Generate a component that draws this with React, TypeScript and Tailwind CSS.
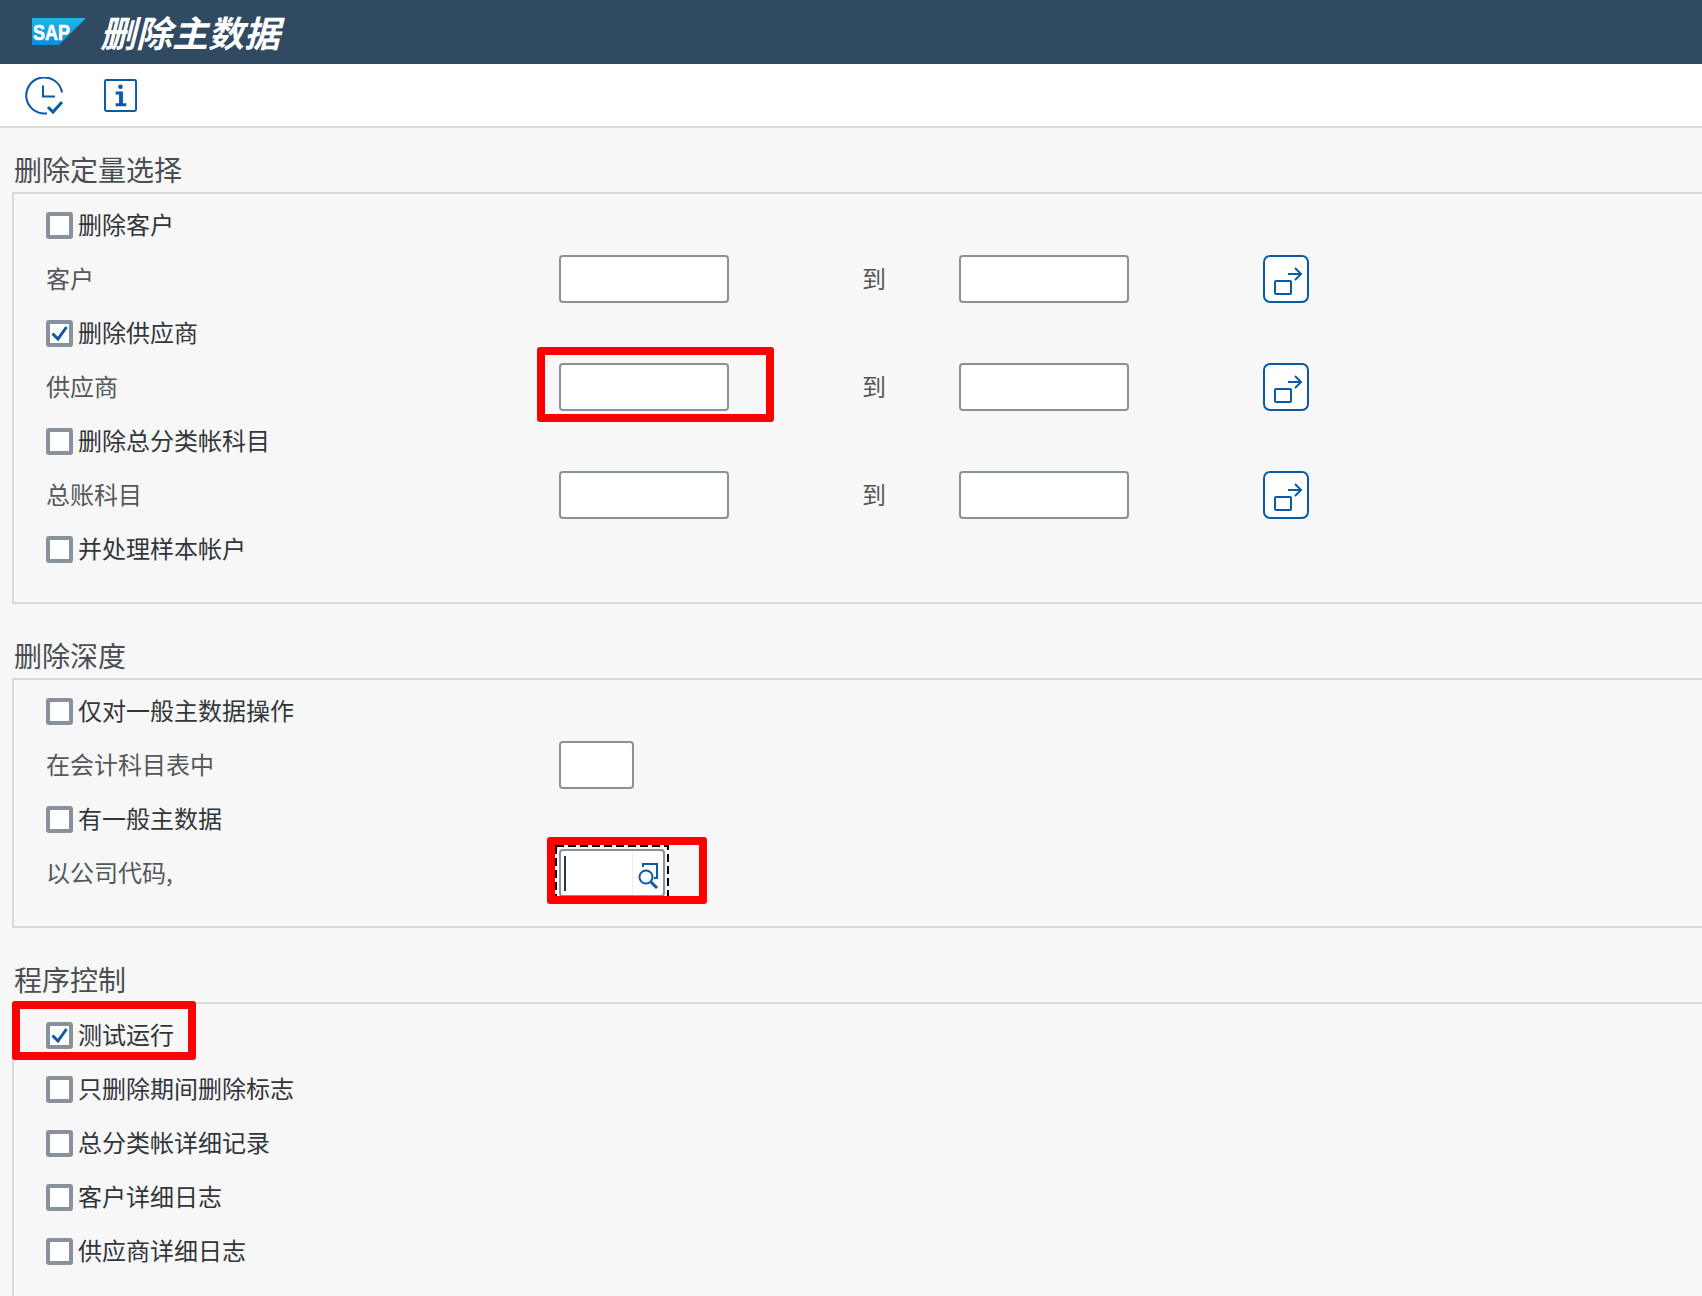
const FONT = "[font-family:'Noto_Sans_CJK_SC','Noto_Sans',sans-serif]";

function SapLogo() {
  return (
    <svg width="54" height="28" viewBox="0 0 54 28" className="shrink-0">
      <defs>
        <linearGradient id="sapBlue" x1="0" y1="0" x2="0" y2="1">
          <stop offset="0" stopColor="#1eb5ee" />
          <stop offset="1" stopColor="#0b8fd6" />
        </linearGradient>
      </defs>
      <polygon points="0,0 54,0 27,27 0,27" fill="url(#sapBlue)" />
      <text x="1" y="22" fontFamily="Liberation Sans" fontSize="22" fontWeight="700" fill="#fff" stroke="#fff" strokeWidth="0.6" textLength="37" lengthAdjust="spacingAndGlyphs">
        SAP
      </text>
    </svg>
  );
}

function ClockCheckIcon() {
  return (
    <svg width="40" height="40" viewBox="0 0 40 40" fill="none" stroke="#0a5aa5" className="mt-[3px] shrink-0">
      <path d="M37 15.5A18 18 0 1 0 22 36.2" strokeWidth="2" />
      <path d="M18 8.5V19.5H30" strokeWidth="2" />
      <path d="M23 30L28 35L37 25" strokeWidth="3" />
    </svg>
  );
}

function InfoIcon() {
  return (
    <svg width="33" height="33" viewBox="0 0 34 34" fill="none" className="mt-px shrink-0">
      <rect x="1" y="1" width="32" height="32" rx="1.5" stroke="#0a5aa5" strokeWidth="2" />
      <circle cx="17" cy="8" r="2.4" fill="#0a5aa5" />
      <path d="M12 13H19.5V25H23V28H12V25H15.5V16H12Z" fill="#0a5aa5" />
    </svg>
  );
}

function MultiSelectButton() {
  return (
    <button className="flex h-12 w-[46px] items-center justify-center rounded-[7px] border-2 border-[#0a5aa5] bg-white">
      <svg width="36" height="36" viewBox="0 0 36 36" fill="none" stroke="#0a5aa5" strokeWidth="2">
        <rect x="7" y="20" width="16" height="13" rx="1" />
        <path d="M20 13H32M27 7L33 13L27 19" />
      </svg>
    </button>
  );
}

function Checkbox({ checked = false }: { checked?: boolean }) {
  return (
    <span className="flex h-[27px] w-[27px] shrink-0 items-center justify-center rounded-[3px] border-4 border-[#89919a] bg-white">
      {checked && (
        <svg width="19" height="19" viewBox="0 0 19 19" fill="none" stroke="#0a5aa5" strokeWidth="3">
          <path d="M2.5 9.5L8 15L16.5 3" />
        </svg>
      )}
    </span>
  );
}

function CheckRow({ label, checked }: { label: string; checked?: boolean }) {
  return (
    <div className="flex h-[54px] items-center gap-[5px]">
      <Checkbox checked={checked} />
      <span className="-mt-[2px] text-[24px] leading-none text-[#32363a]">{label}</span>
    </div>
  );
}

function TextBox({ width = "w-[170px]" }: { width?: string }) {
  return <div className={`h-12 rounded-[4px] border-2 border-[#89919a] bg-white ${width}`} />;
}

function RedBox({ className }: { className: string }) {
  return <div className={`pointer-events-none absolute rounded-[3px] border-[8px] border-[#ff0000] ${className}`} />;
}

function FieldLabel({ text }: { text: string }) {
  return <span className="-mt-[2px] w-[513px] text-[24px] leading-none text-[#53585c]">{text}</span>;
}

function RangeRow({ label, marked }: { label: string; marked?: boolean }) {
  return (
    <div className="flex h-[54px] items-center">
      <FieldLabel text={label} />
      <div className="relative">
        <TextBox />
        {marked && <RedBox className="-top-[16px] -left-[22px] h-[75px] w-[237px]" />}
      </div>
      <span className="-mt-[2px] ml-[133px] w-[97px] text-[24px] leading-none text-[#53585c]">到</span>
      <TextBox />
      <div className="ml-[134px]">
        <MultiSelectButton />
      </div>
    </div>
  );
}

function Section({ title, children }: { title: string; children: React.ReactNode }) {
  return (
    <section>
      <h2 className="pb-[6px] pl-[14px] text-[28px] leading-[34px] text-[#4a4e52]">{title}</h2>
      <div className="relative ml-3 border-y-2 border-l-2 border-[#d9d9d9] pt-[4px] pb-[26px] pl-[32px]">{children}</div>
    </section>
  );
}

export default function App() {
  return (
    <div className={`h-[1296px] w-[1702px] overflow-hidden bg-[#f7f7f7] ${FONT}`}>
      <header className="flex h-16 items-center gap-[14px] bg-[#2f4a61] pl-8">
        <SapLogo />
        <h1 className="-mt-[2px] text-[36px] leading-none font-bold text-white italic">删除主数据</h1>
      </header>

      <div className="flex h-16 items-center gap-[39px] border-b-2 border-[#d9d9d9] bg-white pl-[25px]">
        <ClockCheckIcon />
        <InfoIcon />
      </div>

      <div className="pt-[24px]">
        <Section title="删除定量选择">
          <CheckRow label="删除客户" />
          <RangeRow label="客户" />
          <CheckRow label="删除供应商" checked />
          <RangeRow label="供应商" marked />
          <CheckRow label="删除总分类帐科目" />
          <RangeRow label="总账科目" />
          <CheckRow label="并处理样本帐户" />
        </Section>

        <div className="h-[34px]" />

        <Section title="删除深度">
          <CheckRow label="仅对一般主数据操作" />
          <div className="flex h-[54px] items-center">
            <FieldLabel text="在会计科目表中" />
            <TextBox width="w-[75px]" />
          </div>
          <CheckRow label="有一般主数据" />
          <div className="flex h-[54px] items-center">
            <FieldLabel text="以公司代码," />
            <div className="relative">
              <svg width="114" height="56" className="absolute -top-1 -left-1" fill="none" stroke="#000" strokeWidth="2">
                <rect x="1" y="1" width="112" height="54" strokeDasharray="8 4" />
              </svg>
              <div className="relative flex h-12 w-[106px] items-stretch rounded-[4px] border-2 border-[#89919a] bg-white">
                <div className="flex w-[72px] items-center border-r border-[#eeeeee] pl-[3px]">
                  <div className="h-[35px] w-[2px] bg-[#32363a]" />
                </div>
                <div className="flex flex-1 items-center justify-center">
                  <svg width="24" height="28" viewBox="0 0 24 28" fill="none" stroke="#0a5aa5" strokeWidth="2" className="mt-[5px]">
                    <path d="M7 5V2H21V16H18" />
                    <circle cx="10" cy="15" r="6.5" fill="#fff" />
                    <path d="M15 20L21 26" strokeWidth="3" />
                  </svg>
                </div>
              </div>
              <RedBox className="-top-3 -left-3 h-[67px] w-[160px]" />
            </div>
          </div>
        </Section>

        <div className="h-[34px]" />

        <Section title="程序控制">
          <div className="relative">
            <CheckRow label="测试运行" checked />
            <RedBox className="-top-[7px] -left-[34px] h-[59px] w-[184px]" />
          </div>
          <CheckRow label="只删除期间删除标志" />
          <CheckRow label="总分类帐详细记录" />
          <CheckRow label="客户详细日志" />
          <CheckRow label="供应商详细日志" />
        </Section>
      </div>
    </div>
  );
}
